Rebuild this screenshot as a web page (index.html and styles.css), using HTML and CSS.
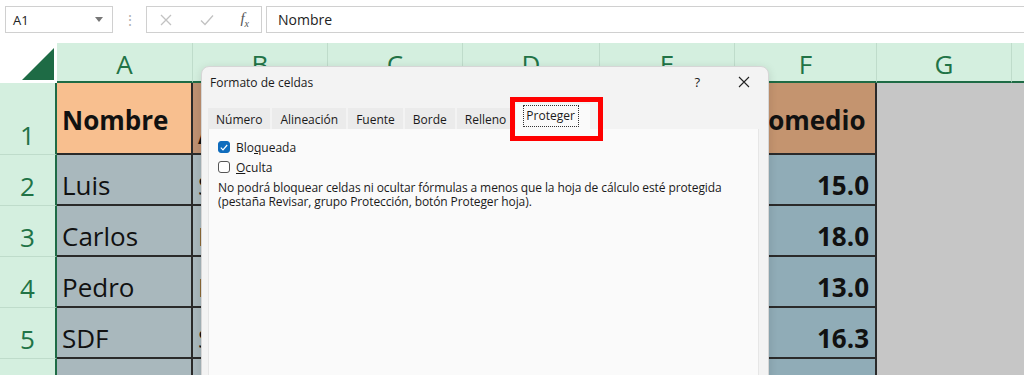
FILE: index.html
```html
<!DOCTYPE html>
<html lang="es">

<head>
    <meta charset="UTF-8">
    <title>Formato de celdas</title>
    <link rel="stylesheet" href="styles.css">
</head>

<body>

    <div class="formula-bar">
        <div class="name-box">
            <span>A1</span>
            <svg class="caret" width="8" height="5" viewBox="0 0 8 5"><path d="M0 0h8L4 5z" fill="#777"></path></svg>
        </div>
        <div class="grip">&#8942;</div>
        <div class="fx-box">
            <svg width="14" height="14" viewBox="0 0 14 14"><path d="M2 2l10 10M12 2L2 12" stroke="#c2c2c2" stroke-width="1.3" fill="none"></path></svg>
            <svg width="16" height="14" viewBox="0 0 16 14"><path d="M2 7.5l4 4L14 2.5" stroke="#c2c2c2" stroke-width="1.3" fill="none"></path></svg>
            <span class="fx">f<sub>x</sub></span>
        </div>
        <div class="formula-input">Nombre</div>
    </div>

    <div class="sheet">
        <div class="corner">
            <svg width="32" height="32" viewBox="0 0 32 32"><path d="M32 0V32H0z" fill="#1e6b45"></path></svg>
        </div>
        <div class="col-head">A</div>
        <div class="col-head">B</div>
        <div class="col-head">C</div>
        <div class="col-head">D</div>
        <div class="col-head">E</div>
        <div class="col-head">F</div>
        <div class="col-head">G</div>
        <div class="col-head last"></div>

        <div class="row-head">1</div>
        <div class="cell head-a">Nombre</div>
        <div class="cell head-b">Apellido</div>
        <div class="cell head-b"></div>
        <div class="cell head-b"></div>
        <div class="cell head-b"></div>
        <div class="cell head-f">Promedio</div>
        <div class="cell blank"></div>
        <div class="cell blank"></div>

        <div class="row-head">2</div>
        <div class="cell name">Luis</div>
        <div class="cell name">Soto</div>
        <div class="cell name"></div>
        <div class="cell name"></div>
        <div class="cell name"></div>
        <div class="cell value">15.0</div>
        <div class="cell blank"></div>
        <div class="cell blank"></div>

        <div class="row-head">3</div>
        <div class="cell name">Carlos</div>
        <div class="cell name">López</div>
        <div class="cell name"></div>
        <div class="cell name"></div>
        <div class="cell name"></div>
        <div class="cell value">18.0</div>
        <div class="cell blank"></div>
        <div class="cell blank"></div>

        <div class="row-head">4</div>
        <div class="cell name">Pedro</div>
        <div class="cell name">Lara</div>
        <div class="cell name"></div>
        <div class="cell name"></div>
        <div class="cell name"></div>
        <div class="cell value">13.0</div>
        <div class="cell blank"></div>
        <div class="cell blank"></div>

        <div class="row-head">5</div>
        <div class="cell name">SDF</div>
        <div class="cell name">SDF</div>
        <div class="cell name"></div>
        <div class="cell name"></div>
        <div class="cell name"></div>
        <div class="cell value">16.3</div>
        <div class="cell blank"></div>
        <div class="cell blank"></div>

        <div class="row-head"></div>
        <div class="cell name"></div>
        <div class="cell name"></div>
        <div class="cell name"></div>
        <div class="cell name"></div>
        <div class="cell name"></div>
        <div class="cell value"></div>
        <div class="cell blank"></div>
        <div class="cell blank"></div>
    </div>

    <!-- dialog floats over the sheet -->
    <div class="dialog">
        <div class="dialog-title">
            <span>Formato de celdas</span>
            <div class="title-buttons">
                <span class="help">?</span>
                <svg width="12" height="12" viewBox="0 0 12 12"><path d="M1 1l10 10M11 1L1 11" stroke="#222" stroke-width="1.1" fill="none"></path></svg>
            </div>
        </div>
        <div class="tabs">
            <div class="tab">Número</div>
            <div class="tab">Alineación</div>
            <div class="tab">Fuente</div>
            <div class="tab">Borde</div>
            <div class="tab">Relleno</div>
            <div class="tab active"><span>Proteger</span></div>
        </div>
        <div class="panel">
            <label class="check">
                <span class="box checked">
                    <svg width="8" height="7" viewBox="0 0 8 7"><path d="M0.8 3.6l2.2 2.2L7.2 1" stroke="#fff" stroke-width="1.2" fill="none"></path></svg>
                </span>
                <span>Blo<u>q</u>ueada</span>
            </label>
            <label class="check">
                <span class="box"></span>
                <span><u>O</u>culta</span>
            </label>
            <p class="note">No podrá bloquear celdas ni ocultar fórmulas a menos que la hoja de cálculo esté protegida<br>(pestaña Revisar, grupo Protección, botón Proteger hoja).</p>
        </div>
    </div>

    <div class="highlight"></div>

</body>

</html>
```

FILE: styles.css
```css
body {
    margin: 0;
    width: 1024px;
    height: 375px;
    overflow: hidden;
    background: #fff;
    font-family: "Open Sans", "Noto Sans", sans-serif;
    position: relative;
}

/* formula bar */

.formula-bar {
    display: flex;
    align-items: center;
    height: 43px;
    padding: 0 0 4px 5px;
    box-sizing: border-box;
}

.name-box {
    width: 108px;
    height: 27px;
    box-sizing: border-box;
    border: 1px solid #d0d0d0;
    display: flex;
    align-items: center;
    justify-content: space-between;
    padding: 0 9px 0 7px;
    font-size: 13px;
    color: #222;
}

.grip {
    width: 33px;
    text-align: center;
    color: #b0b0b0;
    font-size: 14px;
}

.fx-box {
    width: 116px;
    height: 27px;
    box-sizing: border-box;
    border: 1px solid #d0d0d0;
    display: flex;
    align-items: center;
    justify-content: space-between;
    padding: 0 12px 0 12px;
}

.fx {
    font-family: "Liberation Serif", serif;
    font-style: italic;
    font-size: 15px;
    color: #555;
}

.fx sub {
    font-size: 10px;
}

.formula-input {
    flex: 1;
    height: 27px;
    box-sizing: border-box;
    margin-left: 4px;
    border: 1px solid #d0d0d0;
    border-right: none;
    display: flex;
    align-items: center;
    padding-left: 11px;
    font-size: 14px;
    color: #222;
}

/* sheet */

.sheet {
    display: grid;
    grid-template-columns: 57px 136px 135px 135px 137px 135px 142px 135px 1fr;
    grid-template-rows: 40px 72px 51px 51px 51px 51px 51px;
}

.corner {
    display: flex;
    align-items: flex-end;
    justify-content: flex-end;
    padding: 0 3px 3px 0;
}

.col-head {
    background: #d4efdf;
    border-right: 1px solid #bfdccb;
    border-bottom: 2px solid #1e6b45;
    color: #217346;
    font-size: 26px;
    display: flex;
    align-items: flex-end;
    justify-content: center;
    line-height: 1;
    padding-bottom: 4px;
    overflow: hidden;
}

.col-head.last {
    border-right: none;
}

.row-head {
    background: #d4efdf;
    border-right: 2px solid #1e6b45;
    border-bottom: 1px solid #bfdccb;
    color: #217346;
    font-size: 26px;
    display: flex;
    align-items: flex-end;
    justify-content: center;
    line-height: 1;
    padding-bottom: 6px;
}

.cell {
    border-right: 2px solid #2a2a2a;
    border-bottom: 2px solid #2a2a2a;
    font-size: 26px;
    line-height: 1;
    display: flex;
    align-items: flex-end;
    padding: 0 6px 6px 5px;
    white-space: nowrap;
    overflow: hidden;
    color: #111;
}

.head-a {
    background: #f8bf8f;
    font-weight: bold;
    align-items: center;
    padding-bottom: 0;
    padding-top: 4px;
}

.head-b {
    background: #bf9172;
    font-weight: bold;
}

.head-f {
    background: #c4946f;
    font-weight: bold;
    align-items: center;
    padding-bottom: 0;
    padding-top: 4px;
}

.name {
    background: #a9b8bd;
}

.value {
    background: #90acb7;
    font-weight: bold;
    justify-content: flex-end;
}

.blank {
    background: #c6c6c6;
    border: none;
}

/* dialog */

.dialog {
    position: absolute;
    left: 201px;
    top: 66px;
    width: 568px;
    height: 330px;
    box-sizing: border-box;
    background: #f3f3f3;
    border: 1px solid #d6d6d6;
    border-radius: 8px 8px 0 0;
    box-shadow: 0 2px 10px rgba(0, 0, 0, 0.12);
    font-size: 12px;
    color: #1a1a1a;
}

.dialog-title {
    height: 32px;
    display: flex;
    align-items: center;
    justify-content: space-between;
    padding: 0 18px 2px 8px;
    box-sizing: border-box;
}

.title-buttons {
    display: flex;
    align-items: center;
    gap: 38px;
}

.help {
    font-size: 13px;
}

.tabs {
    display: flex;
    align-items: flex-end;
    margin: 6px 0 0 6px;
    height: 24px;
}

.tab {
    height: 21px;
    box-sizing: border-box;
    background: #ebebeb;
    margin-right: 2px;
    padding: 3px 8px 0;
    white-space: nowrap;
}

.tab.active {
    height: 25px;
    width: 74px;
    padding: 3px 0 0 7px;
    background: #fafafa;
}

.tab.active span {
    border: 1px dotted #333;
    padding: 1px 3px 2px 2px;
}

.panel {
    margin: 0 9px 0 6px;
    height: 270px;
    background: #fafafa;
    border: 1px solid #e6e6e6;
    border-top: none;
    padding: 8px 8px 0 9px;
}

.check {
    display: flex;
    align-items: center;
    gap: 6px;
    height: 20px;
}

.box {
    width: 12px;
    height: 12px;
    box-sizing: border-box;
    border: 1px solid #555;
    border-radius: 3px;
    background: #fff;
    display: flex;
    align-items: center;
    justify-content: center;
}

.box.checked {
    background: #0f6cbd;
    border-color: #0f6cbd;
}

.note {
    margin: 4px 0 0;
    line-height: 14px;
    letter-spacing: -0.1px;
}

/* red marker around the active tab */

.highlight {
    position: absolute;
    left: 510px;
    top: 97px;
    width: 93px;
    height: 44px;
    box-sizing: border-box;
    border: 5px solid #ff0000;
}
```
